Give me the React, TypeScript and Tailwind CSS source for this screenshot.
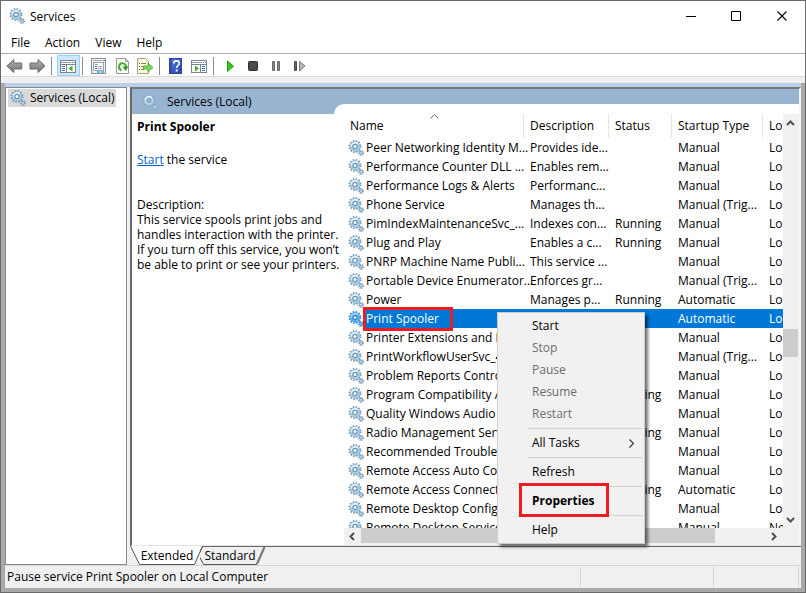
import React from "react";

type Row = { name: string; desc: string; status?: string; type: string; logon: string };

const ROWS: Row[] = [
  { name: "Peer Networking Identity M...", desc: "Provides ide...", type: "Manual", logon: "Lo" },
  { name: "Performance Counter DLL ...", desc: "Enables rem...", type: "Manual", logon: "Lo" },
  { name: "Performance Logs & Alerts", desc: "Performanc...", type: "Manual", logon: "Lo" },
  { name: "Phone Service", desc: "Manages th...", type: "Manual (Trig...", logon: "Lo" },
  { name: "PimIndexMaintenanceSvc_...", desc: "Indexes con...", status: "Running", type: "Manual", logon: "Lo" },
  { name: "Plug and Play", desc: "Enables a c...", status: "Running", type: "Manual", logon: "Lo" },
  { name: "PNRP Machine Name Publi...", desc: "This service ...", type: "Manual", logon: "Lo" },
  { name: "Portable Device Enumerator...", desc: "Enforces gr...", type: "Manual (Trig...", logon: "Lo" },
  { name: "Power", desc: "Manages p...", status: "Running", type: "Automatic", logon: "Lo" },
  { name: "Print Spooler", desc: "", type: "Automatic", logon: "Lo" },
  { name: "Printer Extensions and No", desc: "", type: "Manual", logon: "Lo" },
  { name: "PrintWorkflowUserSvc_46", desc: "", type: "Manual (Trig...", logon: "Lo" },
  { name: "Problem Reports Control", desc: "", type: "Manual", logon: "Lo" },
  { name: "Program Compatibility A", desc: "", status: "Running", type: "Manual", logon: "Lo" },
  { name: "Quality Windows Audio V", desc: "", type: "Manual", logon: "Lo" },
  { name: "Radio Management Servi", desc: "", status: "Running", type: "Manual", logon: "Lo" },
  { name: "Recommended Troublesh", desc: "", type: "Manual", logon: "Lo" },
  { name: "Remote Access Auto Con", desc: "", type: "Manual", logon: "Lo" },
  { name: "Remote Access Connecti", desc: "", status: "Running", type: "Automatic", logon: "Lo" },
  { name: "Remote Desktop Configu", desc: "", type: "Manual", logon: "Lo" },
  { name: "Remote Desktop Services", desc: "", type: "Manual", logon: "Ne" },
];

const SELECTED = "Print Spooler";

function Gear({ selected = false, faded = false }: { selected?: boolean; faded?: boolean }) {
  const edge = selected ? "#2583d2" : faded ? "#86abc9" : "#6f96b5";
  const ring = selected ? "#64b0ea" : faded ? "#b7d6ea" : "#a9d0e8";
  const hi = selected ? "#a5d3f5" : "#e0f2fc";
  const hole = selected ? "#d8ecfb" : faded ? "#99b4d1" : "#ffffff";
  return (
    <svg width="16" height="16" viewBox="0 0 16 16" className="block shrink-0" aria-hidden="true">
      <circle cx="7" cy="6.5" r="5.7" fill="none" stroke={edge} strokeWidth="1.6" strokeDasharray="1.5 1.48" />
      <circle cx="7" cy="6.5" r="4.900" fill={ring} stroke={edge} strokeWidth="0.5" />
      <path d="M3.300 6.500a3.700 3.700 0 0 1 6.300-2.600" fill="none" stroke={hi} strokeWidth="1.8" />
      <circle cx="7" cy="6.5" r="2.1" fill={hole} stroke={edge} strokeWidth="1.2" />
      <circle cx="13" cy="13" r="2.3" fill="none" stroke={edge} strokeWidth="1.4" strokeDasharray="0.95 0.855" />
      <circle cx="13" cy="13" r="1.5" fill={hi} stroke={edge} strokeWidth="0.8" />
      <circle cx="13" cy="13" r="0.5" fill={edge} />
    </svg>
  );
}

function ToolButton({ label, active = false, children }: { label: string; active?: boolean; children: React.ReactNode }) {
  return (
    <button
      type="button"
      aria-label={label}
      className={
        active
          ? "flex h-[21px] w-[23px] items-center justify-center border border-[#99d1ff] bg-[#cce8ff]"
          : "flex h-[21px] w-[23px] items-center justify-center"
      }
    >
      <svg width="17" height="16" viewBox="0 0 17 16" className="block shrink-0" aria-hidden="true">
        {children}
      </svg>
    </button>
  );
}

function ToolSeparator() {
  return <div className="ml-0.5 mr-[5px] h-[18px] w-px bg-[#8c8c8c]" />;
}

function WindowGlyph({ flip = false }: { flip?: boolean }) {
  return (
    <>
      <rect x="0.5" y="2.5" width="15" height="12" fill="#fff" stroke="#7c858e" />
      <path d="M1 4.500h10" stroke="#8d969e" />
      <path d="M12 4.500h1M14 4.500h1" stroke="#5f6972" />
      <path d="M1 6.500h14" stroke="#7c858e" />
      {flip ? (
        <>
          <path d="M9.500 7v7" stroke="#7c858e" />
          <path d="M11 8.500h3M11 10.500h3M11 12.500h3" stroke="#3f78c0" />
          <path d="M4 7.500v6l4-3z" fill="#3fae2a" />
        </>
      ) : (
        <>
          <path d="M6.500 7v7" stroke="#7c858e" />
          <path d="M2 8.500h3M2 10.500h3M2 12.500h3" stroke="#3f78c0" />
          <path d="M12.500 7.500v6l-4-3z" fill="#3fae2a" />
        </>
      )}
    </>
  );
}

function Toolbar() {
  return (
    <div role="toolbar" aria-label="Tools" className="flex h-[23px] items-center border-b border-[#dcdcdc] bg-white pl-0.5 pt-px">
      <svg width="0" height="0" className="absolute" aria-hidden="true">
        <defs>
          <linearGradient id="arrowFill" x1="0" y1="0" x2="0" y2="1">
            <stop offset="0" stopColor="#b4b4b4" />
            <stop offset="1" stopColor="#6e6e6e" />
          </linearGradient>
          <linearGradient id="helpFill" x1="0" y1="0" x2="1" y2="1">
            <stop offset="0" stopColor="#5c7fe0" />
            <stop offset="1" stopColor="#2443a5" />
          </linearGradient>
        </defs>
      </svg>
      <ToolButton label="Back">
        <path d="M0.800 8l7-6.500v3.500h8v6h-8v3.500z" fill="url(#arrowFill)" stroke="#6b6b6b" />
      </ToolButton>
      <ToolButton label="Forward">
        <path d="M16 8L9 1.500V5H1v6h8v3.500z" fill="url(#arrowFill)" stroke="#6b6b6b" />
      </ToolButton>
      <ToolSeparator />
      <ToolButton label="Show or hide console tree" active>
        <WindowGlyph />
      </ToolButton>
      <ToolSeparator />
      <ToolButton label="Properties">
        <rect x="0.500" y="0.500" width="14" height="15" fill="#eef0f2" stroke="#8a9299" />
        <path d="M2 2.500h9" stroke="#a4acb4" />
        <path d="M12 2.500h2" stroke="#6c757d" />
        <rect x="2.500" y="4.500" width="10" height="8" fill="#fff" stroke="#9aa3ab" />
        <path d="M4 6.500h3" stroke="#8c949c" />
        <path d="M4 8.500h2M4 10.500h2" stroke="#3f78c0" />
        <path d="M7 8.500h4M7 10.500h4" stroke="#a0a7ae" />
        <path d="M6 14h3M10 14h3" stroke="#35b8ea" strokeWidth="1.500" />
      </ToolButton>
      <ToolButton label="Refresh">
        <path d="M2.500 0.500h9l3 3v12h-12z" fill="#fbfaf4" stroke="#9a9a92" />
        <path d="M11.500 0.500v3h3" fill="none" stroke="#9a9a92" />
        <path d="M7.500 12.200A3.500 3.500 0 1 1 12 9" fill="none" stroke="#3fae2a" strokeWidth="2" />
        <path d="M8.500 8.500h6l-3 4.500z" fill="#2f9a20" />
      </ToolButton>
      <ToolButton label="Export list">
        <path d="M0.500 0.500h8l3 3v12h-11z" fill="#fdf8dc" stroke="#a39f88" />
        <path d="M2 5.500h1M2 8.500h1M2 11.500h1" stroke="#55554a" />
        <path d="M4 5.500h5M4 8.500h3M4 11.500h3" stroke="#8a8672" />
        <path d="M6.500 8H11V5l5 4.500-5 4.500v-3H6.500z" fill="#7cd65a" stroke="#4aa535" strokeWidth="0.8" />
      </ToolButton>
      <ToolSeparator />
      <ToolButton label="Help">
        <rect x="1.500" y="0.500" width="12" height="15" fill="url(#helpFill)" stroke="#2b459c" />
        <path d="M3 1v14" stroke="#203a92" />
        <path d="M5.800 5.500c0-3.500 5.500-3.500 5.500 0 0 2-2.600 2-2.600 4.500" fill="none" stroke="#fff" strokeWidth="1.6" />
        <rect x="7.700" y="11.500" width="2" height="2" fill="#fff" />
      </ToolButton>
      <ToolButton label="Show or hide action pane">
        <WindowGlyph flip />
      </ToolButton>
      <ToolSeparator />
      <ToolButton label="Start service">
        <path d="M5.500 3v10.500L11.500 8.300z" fill="#35c51d" stroke="#1fa010" />
      </ToolButton>
      <ToolButton label="Stop service">
        <rect x="3.500" y="3.500" width="9" height="9" rx="1" fill="#4a4a4a" stroke="#303030" />
      </ToolButton>
      <ToolButton label="Pause service">
        <path d="M4.500 3.500h2v9h-2zM9.500 3.500h2v9h-2z" fill="#8a8a8a" stroke="#666" />
      </ToolButton>
      <ToolButton label="Restart service">
        <path d="M3.500 3.500h2v9h-2z" fill="#666" stroke="#4a4a4a" />
        <path d="M8.500 3.200v9.800L14 8z" fill="#b5b5b5" stroke="#7d7d7d" />
      </ToolButton>
    </div>
  );
}

function TitleBar() {
  return (
    <header className="flex h-[30px] items-center bg-white pl-2">
      <Gear />
      <h1 className="flex-1 pl-[5px] pt-0.5">Services</h1>
      <button type="button" aria-label="Minimize" className="flex h-full w-[46px] items-center justify-center">
        <svg width="11" height="11" viewBox="0 0 11 11"><path d="M0 5.500h10" stroke="#000" /></svg>
      </button>
      <button type="button" aria-label="Maximize" className="flex h-full w-[45px] items-center justify-center">
        <svg width="11" height="11" viewBox="0 0 11 11"><path d="M0.500 0.500h9v9h-9z" fill="none" stroke="#000" /></svg>
      </button>
      <button type="button" aria-label="Close" className="flex h-full w-[46px] items-center justify-center">
        <svg width="11" height="11" viewBox="0 0 11 11"><path d="M0.500 0.500l9 9M9.500 0.500l-9 9" stroke="#000" strokeWidth="1.100" /></svg>
      </button>
    </header>
  );
}

function MenuBar() {
  return (
    <nav className="flex h-[23px] items-center gap-[15px] border-b border-[#a9afba] bg-white pl-2.5 pt-px">
      <button type="button">File</button>
      <button type="button">Action</button>
      <button type="button">View</button>
      <button type="button">Help</button>
    </nav>
  );
}

function ServiceRow({ row }: { row: Row }) {
  const selected = row.name === SELECTED;
  const cell = selected ? "bg-[#0078d7] p-0 pl-1.5 text-white" : "p-0 pl-1.5";
  return (
    <tr className="h-[19px]">
      <td className="p-0">
        <div className="flex h-[19px] items-center pl-1">
          <Gear selected={selected} />
          <span
            className={
              selected
                ? "relative flex h-[19px] flex-1 items-center bg-[#0078d7] pl-0.5 text-white"
                : "flex-1 pl-0.5"
            }
          >
            {row.name}
            {selected && <span className="absolute -left-px -top-0.5 h-6 w-[90px] border-3 border-[#ed1c24]" />}
          </span>
        </div>
      </td>
      <td className={cell}>{row.desc}</td>
      <td className={cell}>{row.status}</td>
      <td className={cell}>{row.type}</td>
      <td className={cell}>{row.logon}</td>
    </tr>
  );
}

function ServiceTable() {
  return (
    <div className="min-h-0 flex-1 overflow-hidden">
      <table className="w-full table-fixed border-separate border-spacing-0 whitespace-nowrap text-left">
        <colgroup>
          <col />
          <col className="w-[85px]" />
          <col className="w-[63px]" />
          <col className="w-[91px]" />
          <col className="w-5" />
        </colgroup>
        <thead>
          <tr className="h-6">
            <th className="relative border-r border-[#e5e5e5] p-0 pl-1.5 font-normal">
              Name
              <svg width="9" height="5" viewBox="0 0 9 5" className="absolute left-[86px] top-0" aria-hidden="true">
                <path d="M0.500 4.500l4-4 4 4" fill="none" stroke="#6b6b6b" />
              </svg>
            </th>
            <th className="border-r border-[#e5e5e5] p-0 pl-1.5 font-normal">Description</th>
            <th className="border-r border-[#e5e5e5] p-0 pl-1.5 font-normal">Status</th>
            <th className="border-r border-[#e5e5e5] p-0 pl-1.5 font-normal">Startup Type</th>
            <th className="p-0 pl-1.5 font-normal">Lo</th>
          </tr>
        </thead>
        <tbody>
          {ROWS.map((row) => (
            <ServiceRow key={row.name} row={row} />
          ))}
        </tbody>
      </table>
    </div>
  );
}

function Chevron({ d }: { d: string }) {
  return (
    <svg width="9" height="9" viewBox="0 0 9 9" className="block" aria-hidden="true">
      <path d={d} fill="none" stroke="#505050" strokeWidth="2" />
    </svg>
  );
}

function HorizontalScroll() {
  return (
    <div className="flex h-[17px] bg-[#f0f0f0]">
      <button type="button" aria-label="Scroll left" className="flex h-4 w-[17px] items-center justify-center">
        <Chevron d="M6 1L2.500 4.500L6 8" />
      </button>
      <div className="flex-1">
        <div className="h-[15px] w-[88%] bg-[#cdcdcd]" />
      </div>
      <button type="button" aria-label="Scroll right" className="flex h-4 w-5 items-center justify-center">
        <Chevron d="M3 1L6.500 4.500L3 8" />
      </button>
    </div>
  );
}

function VerticalScroll() {
  return (
    <div className="flex w-4 flex-col bg-[#f0f0f0] pb-[17px]">
      <button type="button" aria-label="Scroll up" className="flex h-[18px] items-center justify-center pr-px">
        <Chevron d="M1 6L4.500 2.500L8 6" />
      </button>
      <div className="grow-[197]" />
      <div className="mr-px h-7 bg-[#cdcdcd]" />
      <div className="grow-[153]" />
      <button type="button" aria-label="Scroll down" className="flex h-[18px] items-center justify-center pr-px">
        <Chevron d="M1 3L4.500 6.500L8 3" />
      </button>
    </div>
  );
}

function MenuItem({ children, disabled = false }: { children: React.ReactNode; disabled?: boolean }) {
  return (
    <button
      type="button"
      role="menuitem"
      disabled={disabled}
      className="flex h-[22px] w-full items-center pl-[34px] pr-2.5 text-black disabled:text-[#6d6d6d]"
    >
      {children}
    </button>
  );
}

function MenuDivider() {
  return <div className="my-[3px] ml-[30px] mr-0.5 h-px bg-[#d2d2d2]" />;
}

function ContextMenu() {
  return (
    <div
      role="menu"
      className="absolute left-[163px] top-[198px] w-[148px] border border-[#cccccc] bg-[#f1f1f1] py-0.5 shadow-[3px_3px_3px_rgba(0,0,0,0.55)]"
    >
      <MenuItem>Start</MenuItem>
      <MenuItem disabled>Stop</MenuItem>
      <MenuItem disabled>Pause</MenuItem>
      <MenuItem disabled>Resume</MenuItem>
      <MenuItem disabled>Restart</MenuItem>
      <MenuDivider />
      <MenuItem>
        <span className="flex-1 text-left">All Tasks</span>
        <svg width="5" height="9" viewBox="0 0 5 9" aria-hidden="true">
          <path d="M0.500 0.500l4 4-4 4" fill="none" stroke="#333" strokeWidth="1.200" />
        </svg>
      </MenuItem>
      <MenuDivider />
      <MenuItem>Refresh</MenuItem>
      <MenuDivider />
      <div className="relative">
        <span className="absolute -top-[7px] left-[21px] h-[34px] w-[90px] border-3 border-[#ed1c24] bg-[#f1f1f1]" />
        <div className="relative font-bold">
          <MenuItem>Properties</MenuItem>
        </div>
      </div>
      <MenuDivider />
      <MenuItem>Help</MenuItem>
    </div>
  );
}

function DescriptionPane() {
  return (
    <section className="w-[202px] shrink-0 whitespace-nowrap pl-[5px] pt-[5px] leading-[15px]">
      <h2 className="font-bold">Print Spooler</h2>
      <p className="mt-[18px]">
        <a href="#start" className="text-[#0066cc] underline">Start</a> the service
      </p>
      <p className="mt-[30px]">Description:</p>
      <p>
        This service spools print jobs and
        <br />
        handles interaction with the printer.
        <br />
        If you turn off this service, you won’t
        <br />
        be able to print or see your printers.
      </p>
    </section>
  );
}

function ViewTabs() {
  return (
    <div role="tablist" className="flex h-[19px] bg-[#f0f0f0]">
      <button type="button" role="tab" aria-selected="true" className="relative w-[70px] pl-1 text-center">
        <svg width="74" height="19" viewBox="0 0 74 19" className="absolute left-0 top-0" aria-hidden="true">
          <path d="M0.500 0L9.500 18.500H64.500L72.500 0z" fill="#fff" />
          <path d="M0.500 0L9.500 18.500H64.500L72.500 0" fill="none" stroke="#555" />
        </svg>
        <span className="relative">Extended</span>
      </button>
      <button type="button" role="tab" aria-selected="false" className="relative w-[60px] text-center">
        <svg width="66" height="19" viewBox="0 0 66 19" className="absolute left-0 top-0" aria-hidden="true">
          <path d="M2.500 0.500L-1.500 9L3.500 18.500H56.500L64.500 0.500" fill="none" stroke="#555" />
          <path d="M57 18L64.500 1" stroke="#777" strokeWidth="2" />
        </svg>
        <span className="relative">Standard</span>
      </button>
      <div className="-ml-[57px] h-px flex-1 bg-[#696969]" />
    </div>
  );
}

export default function App() {
  return (
    <div className="flex h-screen flex-col overflow-hidden border border-[#696969] bg-[#f0f0f0] font-['Segoe_UI','Open_Sans',sans-serif] text-[12px] leading-4 text-black">
      <TitleBar />
      <MenuBar />
      <Toolbar />
      <div className="h-1.5 shrink-0" />
      <div className="flex min-h-0 flex-1 flex-col border-x-4 border-b-4 border-[#a9a9a9]">
        <div className="h-1 shrink-0 bg-[#b9d1ea]" />
        <main className="flex min-h-0 flex-1 gap-[3px]">
          <aside className="w-[122px] shrink-0 border border-[#828790] bg-white">
            <div className="ml-0.5 mt-px flex h-[18px] w-[108px] items-center whitespace-nowrap bg-[#d9d9d9] pl-0.5">
              <Gear />
              <span className="pl-1">Services (Local)</span>
            </div>
          </aside>
          <div className="flex min-w-0 flex-1 flex-col">
            <div className="flex min-h-0 flex-1 flex-col border-b border-l-2 border-r-2 border-t-2 border-b-[#e3e3e3] border-l-[#696969] border-r-[#f4f4f4] border-t-[#787878] bg-white">
              <div className="flex h-[25px] shrink-0 bg-[#99b4d1]">
                <div className="flex w-[202px] items-center pl-2.5">
                  <Gear faded />
                  <span className="pl-[9px]">Services (Local)</span>
                </div>
                <div className="h-[10px] flex-1 self-end rounded-tl-[10px] bg-white" />
              </div>
              <div className="flex min-h-0 flex-1">
                <DescriptionPane />
                <section className="relative flex min-w-0 flex-1 pl-2.5">
                  <div className="flex min-w-0 flex-1 flex-col">
                    <ServiceTable />
                    <HorizontalScroll />
                  </div>
                  <VerticalScroll />
                  <ContextMenu />
                </section>
              </div>
            </div>
            <ViewTabs />
          </div>
        </main>
        <footer className="flex h-[23px] shrink-0 items-center border-t border-[#d7d7d7]">
          <span className="flex-1 pl-0.5">Pause service Print Spooler on Local Computer</span>
          <span className="h-5 w-[133px] border-l border-[#d7d7d7]" />
          <span className="mr-0.5 h-5 w-[86px] border-x border-[#d7d7d7]" />
        </footer>
      </div>
    </div>
  );
}
